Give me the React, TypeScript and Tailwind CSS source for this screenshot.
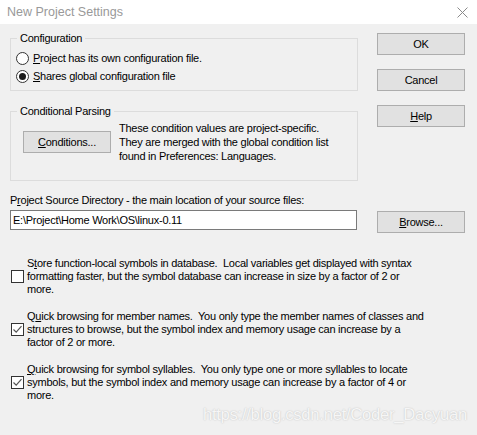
import React from "react";

function Radio({ checked }: { checked?: boolean }) {
  return (
    <span className="w-[13px] h-[13px] rounded-full border border-[#333333] bg-white flex items-center justify-center shrink-0">
      {checked && <span className="w-[7px] h-[7px] rounded-full bg-[#1a1a1a]" />}
    </span>
  );
}

function Check({ checked }: { checked?: boolean }) {
  return (
    <span className="w-[13px] h-[13px] border border-[#333333] bg-white flex items-center justify-center shrink-0">
      {checked && (
        <svg width="11" height="11" viewBox="0 0 11 11">
          <path d="M1.5 5.5 L4.2 8.2 L9.5 2.2" fill="none" stroke="#555555" strokeWidth="1.2" />
        </svg>
      )}
    </span>
  );
}

function Btn({ children, className = "" }: { children: React.ReactNode; className?: string }) {
  return (
    <div
      className={
        "w-[88px] h-[22px] bg-[#e1e1e1] border border-[#adadad] flex items-center justify-center shrink-0 " +
        className
      }
    >
      {children}
    </div>
  );
}

function Opt({ checked, lines }: { checked?: boolean; lines: React.ReactNode[] }) {
  return (
    <div className="flex items-center">
      <span className="ml-[1px]">
        <Check checked={checked} />
      </span>
      <div className="ml-[3px] whitespace-pre leading-[13px]">
        {lines.map((l, i) => (
          <div key={i}>{l}</div>
        ))}
      </div>
    </div>
  );
}

export default function App() {
  return (
    <div
      className="relative w-[477px] h-[435px] bg-[#f0f0f0] overflow-hidden text-black text-[11px] tracking-[-0.25px]"
      style={{ fontFamily: '"Liberation Sans", Arial, sans-serif' }}
    >
      <div className="h-[24px] bg-white flex items-center justify-between pl-[7px] pr-[9px]">
        <span className="text-[12.5px] tracking-normal text-[#999999]">New Project Settings</span>
        <svg width="11" height="11" viewBox="0 0 11 11">
          <path d="M0.5 0.5 L10.5 10.5 M10.5 0.5 L0.5 10.5" stroke="#8a8a8a" strokeWidth="1" fill="none" />
        </svg>
      </div>

      <div className="px-[10px] flex flex-col">
        <div className="flex">
          <div className="w-[348px] flex flex-col">
            <fieldset className="mt-[7px] border border-[#dcdcdc] pl-[5px] pt-[4px] pb-[5px]">
              <legend className="ml-[1px] px-[3px] leading-[14px]">Configuration</legend>
              <div className="h-[18px] flex items-center">
                <Radio />
                <span className="ml-[4px]">
                  <u>P</u>roject has its own configuration file.
                </span>
              </div>
              <div className="h-[18px] flex items-center">
                <Radio checked />
                <span className="ml-[4px]">
                  <u>S</u>hares global configuration file
                </span>
              </div>
            </fieldset>

            <fieldset className="mt-[13px] border border-[#dcdcdc] pl-[5px] pt-[3px] pb-[17px]">
              <legend className="ml-[1px] px-[3px] leading-[14px]">Conditional Parsing</legend>
              <div className="flex items-start">
                <Btn className="mt-[10px] ml-[7px]">
                  <span>
                    <u>C</u>onditions...
                  </span>
                </Btn>
                <div className="ml-[8px] leading-[14px]">
                  <div>These condition values are project-specific.</div>
                  <div>They are merged with the global condition list</div>
                  <div>found in Preferences: Languages.</div>
                </div>
              </div>
            </fieldset>
          </div>

          <div className="ml-[19px] mt-[9px] flex flex-col gap-[14px]">
            <Btn>OK</Btn>
            <Btn>Cancel</Btn>
            <Btn>
              <span>
                <u>H</u>elp
              </span>
            </Btn>
          </div>
        </div>

        <div className="mt-[13px] leading-[13px]">
          P<u>r</u>oject Source Directory - the main location of your source files:
        </div>

        <div className="mt-[3px] flex items-start">
          <div className="w-[347px] h-[20px] bg-white border border-[#7a7a7a] flex items-center pl-[2px]">
            E:\Project\Home Work\OS\linux-0.11
          </div>
          <Btn className="ml-[20px] mt-[1px]">
            <span>
              <u>B</u>rowse...
            </span>
          </Btn>
        </div>

        <div className="mt-[24px] flex flex-col gap-[14px]">
          <Opt
            lines={[
              <>
                S<u>t</u>ore function-local symbols in database.  Local variables get displayed with syntax
              </>,
              "formatting faster, but the symbol database can increase in size by a factor of 2 or",
              "more.",
            ]}
          />
          <Opt
            checked
            lines={[
              <>
                Q<u>u</u>ick browsing for member names.  You only type the member names of classes and
              </>,
              "structures to browse, but the symbol index and memory usage can increase by a",
              "factor of 2 or more.",
            ]}
          />
          <Opt
            checked
            lines={[
              <>
                <u>Q</u>uick browsing for symbol syllables.  You only type one or more syllables to locate
              </>,
              "symbols, but the symbol index and memory usage can increase by a factor of 4 or",
              "more.",
            ]}
          />
        </div>
      </div>

      <div
        className="absolute right-[10px] top-[405px] text-[16.7px] leading-[20px] tracking-[-0.3px] text-[#f6f6f6] whitespace-nowrap"
        style={{ textShadow: "0 0 1.5px #b8b8b8" }}
      >
        https://blog.csdn.net/Coder_Dacyuan
      </div>
    </div>
  );
}
